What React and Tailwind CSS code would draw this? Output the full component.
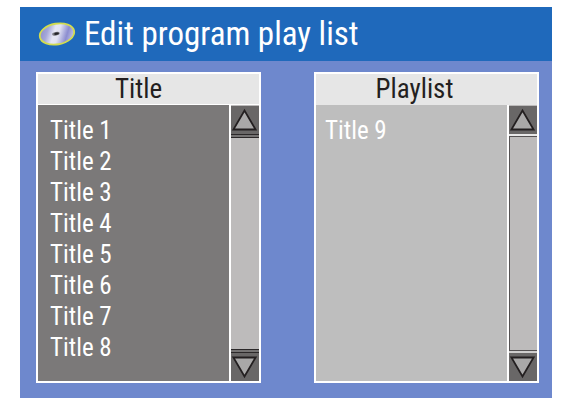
const titles = ["Title 1", "Title 2", "Title 3", "Title 4", "Title 5", "Title 6", "Title 7", "Title 8"];
const playlist = ["Title 9"];

function DiscIcon() {
  return (
    <svg width="38" height="26" viewBox="0 0 38 26" aria-hidden="true">
      <defs>
        <linearGradient id="disc" x1="0" y1="0.3" x2="1" y2="0.6">
          <stop offset="0" stopColor="#8c8dcb" />
          <stop offset="0.22" stopColor="#a5a7d8" />
          <stop offset="0.42" stopColor="#e6e7f4" />
          <stop offset="0.55" stopColor="#e2e3f2" />
          <stop offset="0.8" stopColor="#8c8dd0" />
          <stop offset="1" stopColor="#c4c6e6" />
        </linearGradient>
      </defs>
      <g transform="rotate(-10 19 13)">
        <ellipse cx="19" cy="13" rx="17.4" ry="10.4" fill="url(#disc)" stroke="#d2dc50" strokeWidth="1.8" />
        <ellipse cx="18" cy="12.6" rx="3.8" ry="1.8" fill="#77787f" />
        <ellipse cx="18.6" cy="12.6" rx="2.4" ry="1.2" fill="#26262a" />
      </g>
    </svg>
  );
}

function ArrowButton({ label, down }) {
  return (
    <button type="button" aria-label={label} className="flex h-7 w-full shrink-0 items-center justify-center bg-[#696767]">
      <svg width="28" height="28" viewBox="0 0 28 28" aria-hidden="true">
        <path
          d={down ? "M2.4 4.5H24.6L13.5 23.5Z" : "M2.4 23.5H24.6L13.5 4.5Z"}
          fill="#a9a8a8"
          stroke="#231f20"
          strokeWidth="1.8"
        />
      </svg>
    </button>
  );
}

function Scrollbar({ name, active }) {
  return (
    <div className="flex w-[30px] shrink-0 flex-col border-l-2 border-white bg-[#bdbbbb] pt-px">
      <ArrowButton label={`Scroll ${name} up`} />
      {active ? (
        <>
          <div className="h-1 border-y border-[#2b2829] bg-[#757373]" />
          <div className="grow" />
          <div className="h-1 border-y border-[#2b2829] bg-[#757373]" />
        </>
      ) : (
        <>
          <div className="h-0.5 bg-[#e8e8e8]" />
          <div className="grow border-y border-l border-[#555253]" />
          <div className="h-0.5 bg-[#cfcece]" />
        </>
      )}
      <ArrowButton label={`Scroll ${name} down`} down />
    </div>
  );
}

function Panel({ name, items, active }) {
  return (
    <section className="flex flex-col border-2 border-white">
      <h2 className={`h-[31px] border-b bg-[#e6e6e6] pr-5 text-center text-[27px] leading-[30px] text-[#231f20] ${active ? "border-white" : "border-[#e6e6e6] pr-6"}`}>
        {name}
      </h2>
      <div className="flex grow">
        <ul className={`grow pt-[10px] pb-[18px] text-[25px] leading-[31px] text-white ${active ? "bg-[#7b7979] pl-3" : "bg-[#bebebe] pl-[9px]"}`}>
          {items.map((item) => (
            <li key={item}>{item}</li>
          ))}
        </ul>
        <Scrollbar name={name} active={active} />
      </div>
    </section>
  );
}

export default function App() {
  return (
    <div className="bg-white pt-[7px] pr-3 pb-1.5 pl-5 font-['Roboto_Condensed','Liberation_Sans_Narrow',Roboto,sans-serif]">
      <main className="bg-[#6e88cd]">
        <header className="flex h-[54px] items-center gap-2 bg-[#1f69bb] pl-[18px]">
          <DiscIcon />
          <h1 className="text-[33px] leading-[56px] text-white">Edit program play list</h1>
        </header>
        <div className="grid grid-cols-2 gap-[53px] pt-[11px] pr-[13px] pb-[15px] pl-4">
          <Panel name="Title" items={titles} active />
          <Panel name="Playlist" items={playlist} />
        </div>
      </main>
    </div>
  );
}
